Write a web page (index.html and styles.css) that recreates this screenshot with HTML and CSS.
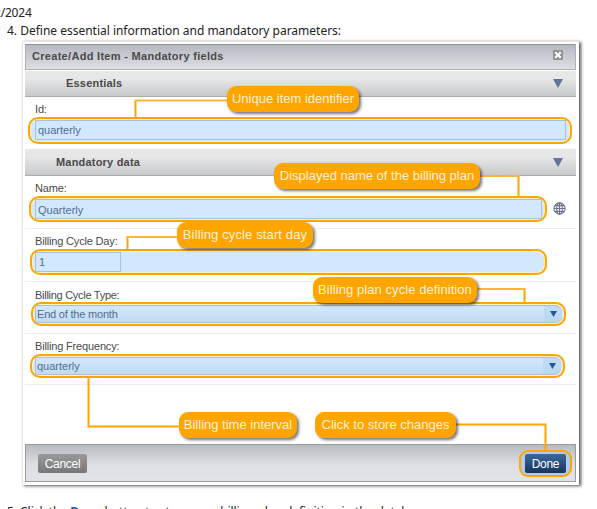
FILE: index.html
```html
<!DOCTYPE html>
<html lang="en">
<head>
<meta charset="utf-8">
<title>Create/Add Item</title>
<link rel="stylesheet" href="styles.css">
</head>
<body>
<main class="page">
  <div class="date">2/2024</div>
  <p class="step">4. Define essential information and mandatory parameters:</p>
  <section class="figure">
    <div class="dialog">
      <header class="titlebar"><h1>Create/Add Item - Mandatory fields</h1><svg class="close" width="10" height="10" viewBox="0 0 10 10"><rect width="10" height="10" rx="1" fill="#929292"/><path d="M2.2 2.2 7.8 7.8M7.8 2.2 2.2 7.8" stroke="#fff" stroke-width="2"/></svg></header>
      <div class="section essentials"><h2>Essentials</h2><i class="fold"></i></div>
      <div class="field id"><label>Id:</label><div class="ring"><div class="input">quarterly</div></div></div>
      <div class="section mandatory"><h2>Mandatory data</h2><i class="fold"></i></div>
      <div class="field name"><label>Name:</label><div class="line"><div class="ring"><div class="input">Quarterly</div></div>
        <svg class="globe" width="13" height="13" viewBox="0 0 13 13" fill="none" stroke="#69748a" stroke-width="1.1"><circle cx="6.5" cy="6.5" r="5.6"/><ellipse cx="6.5" cy="6.5" rx="2.8" ry="5.6"/><path d="M6.5 1v11M1 6.5h11M2 3.6h9M2 9.4h9"/></svg></div></div>
      <div class="field day"><label>Billing Cycle Day:</label><div class="ring"><div class="input">1</div></div></div>
      <div class="field type"><label>Billing Cycle Type:</label><div class="ring"><div class="select">End of the month<i></i></div></div></div>
      <div class="field freq"><label>Billing Frequency:</label><div class="ring"><div class="select">quarterly<i></i></div></div></div>
      <footer class="actions"><button class="cancel">Cancel</button><div class="done-ring"><button class="done">Done</button></div></footer>
    </div>
  </section>
  <p class="step next">5. Click the <b>Done</b> button to store your billing plan definition in the database.</p>
  <svg class="leaders" width="597" height="509" fill="none" stroke="#ffa500" stroke-width="2">
    <path d="M135.500 117V101M518.500 176V197M127.500 250V237M524.500 289V304M88.500 378V426.500H180M456 424.500H545.500V451"/>
    <path d="M228 100.500H134.500M479 176H519.500M178 237H126.500M478 289H525.500" stroke="#ffb733"/>
  </svg>
  <div class="callout c1">Unique item identifier</div>
  <div class="callout c2">Displayed name of the billing plan</div>
  <div class="callout c3">Billing cycle start day</div>
  <div class="callout c4">Billing plan cycle definition</div>
  <div class="callout c5">Billing time interval</div>
  <div class="callout c6">Click to store changes</div>
</main>
</body>
</html>
```
FILE: styles.css
```css
* { box-sizing: border-box; }
body { margin: 0; background: #fff; }
.page { position: relative; width: 597px; height: 509px; overflow: hidden; font: 11px "Liberation Sans", sans-serif; color: #4a4a4a; }
.date { height: 20px; padding-top: 4px; text-indent: -6px; letter-spacing: -.2px; font: 12px/18px "Noto Sans", sans-serif; color: #222; }
.step { margin: 0; height: 20px; padding-left: 7px; font: 12px/22px "Noto Sans", sans-serif; letter-spacing: -.01px; color: #222; white-space: nowrap; }
.step b { color: #30559c; }
.figure { width: 557px; height: 444px; margin: 1px 0 0 22px; padding: 4px 3px 4px 2px; border: solid #e5e5e5; border-width: 1px 0 0 1px; box-shadow: 2px 1px 3px #555; background: #fff; }
.dialog { width: 551px; margin-top: -2px; }
.titlebar { display: flex; justify-content: space-between; height: 26px; padding: 5px 12px 0 6px; border: 1px solid #adb0b8; border-top-color: #929292; background: linear-gradient(#b7b9c2, #dedfe4); }
h1, h2 { margin: 0; font-size: 11px; line-height: 13px; letter-spacing: .2px; }
h1 { letter-spacing: .3px; }
.section { display: flex; justify-content: space-between; height: 27px; padding: 7px 13px 0 41px; border-bottom: 1px solid #aaa; background: linear-gradient(#e7e7e7 30%, #c8c9cc); }
.essentials { height: 26px; margin-top: 1px; padding-top: 6px; }
.mandatory { padding-left: 31px; }
.fold { width: 10px; height: 9px; margin-top: 2px; background: #60759c; clip-path: polygon(0 0, 100% 0, 50% 100%); }
.field { border-bottom: 1px solid #ededed; }
label { display: block; padding-left: 10px; line-height: 13px; letter-spacing: -.17px; }
.ring { border: 2px solid #ffa500; border-radius: 10px; background: #d1e8ff; box-shadow: inset 0 0 0 1px #fff0c5; color: #526e91; }
.input { border: 1px solid #a8c2dc; }
.id { height: 52px; padding-top: 6px; border: 0; }
.id .ring { width: 544px; height: 27px; margin: 1px 0 0 3px; padding: 1px 4px 2px 5px; }
.id .input { height: 20px; line-height: 19px; padding-left: 2px; }
.name { height: 53px; padding-top: 6px; }
.line { display: flex; }
.name .ring { width: 518px; height: 26px; margin: 1px 0 0 4px; padding: 1px 3px 1px 4px; }
.name .input { height: 20px; line-height: 20px; padding-left: 2px; }
.globe { margin: 7px 0 0 6px; }
.day { height: 53px; padding-top: 6px; }
.day .ring { width: 517px; height: 26px; margin: 1px 0 0 5px; padding: 1px 3px; }
.day .input { width: 86px; height: 20px; line-height: 19px; padding-left: 3px; }
.type { height: 52px; padding-top: 7px; }
.type label { letter-spacing: -.28px; }
.type .ring { width: 535px; height: 24px; margin: 0 0 0 6px; padding: 1px 2px; }
.type .select { letter-spacing: -.2px; }
.freq { height: 51px; padding-top: 6px; }
.freq .ring { width: 535px; height: 24px; margin: 1px 0 0 5px; padding: 1px 2px 1px 3px; }
.select { height: 18px; padding: 0 5px 0 1px; display: flex; justify-content: space-between; align-items: center; border: solid #a8c2dc; border-width: 1px 0 1px 1px; border-radius: 0 7px 7px 0; background: linear-gradient(90deg, transparent calc(100% - 18px), #b4d3f188 0), linear-gradient(#d1e8ff, #c3dbf2); }
.select i { width: 7px; height: 6px; background: #285798; clip-path: polygon(0 0, 100% 0, 50% 100%); }
.actions { display: flex; justify-content: space-between; height: 38px; margin-top: 59px; padding: 5px 3px 0 12px; border: 1px solid #999ba1; background: linear-gradient(#b9bbc2, #dddfe4 55%, #e2e3e7); }
button { font: 12px "Liberation Sans", sans-serif; letter-spacing: -.3px; color: #fff; border: 0; border-radius: 2px; padding: 0; }
.cancel { width: 49px; height: 19px; margin-top: 4px; background: linear-gradient(#999, #777); }
.done-ring { width: 53px; height: 27px; padding: 2px 4px; border: 2px solid #ffa500; border-radius: 9px; background: #b0cce9; }
.done { display: block; width: 41px; height: 19px; background: linear-gradient(#3c689d, #18345e); }
.next { margin-top: 16px; letter-spacing: -.05px; }
.leaders { position: absolute; inset: 0; }
.callout { position: absolute; height: 26px; line-height: 26px; text-align: center; white-space: nowrap; border-radius: 9px; background: #ffa500; color: #fff2d9; font-size: 13px; box-shadow: 2px 2px 3px #0008; }
.c1 { left: 227px; top: 86px; width: 132px; }
.c2 { left: 274px; top: 163px; width: 206px; }
.c3 { left: 177px; top: 222px; width: 136px; letter-spacing: .13px; }
.c4 { left: 313px; top: 277px; width: 164px; letter-spacing: .07px; }
.c5 { left: 179px; top: 412px; width: 118px; }
.c6 { left: 315px; top: 412px; width: 141px; }
```
